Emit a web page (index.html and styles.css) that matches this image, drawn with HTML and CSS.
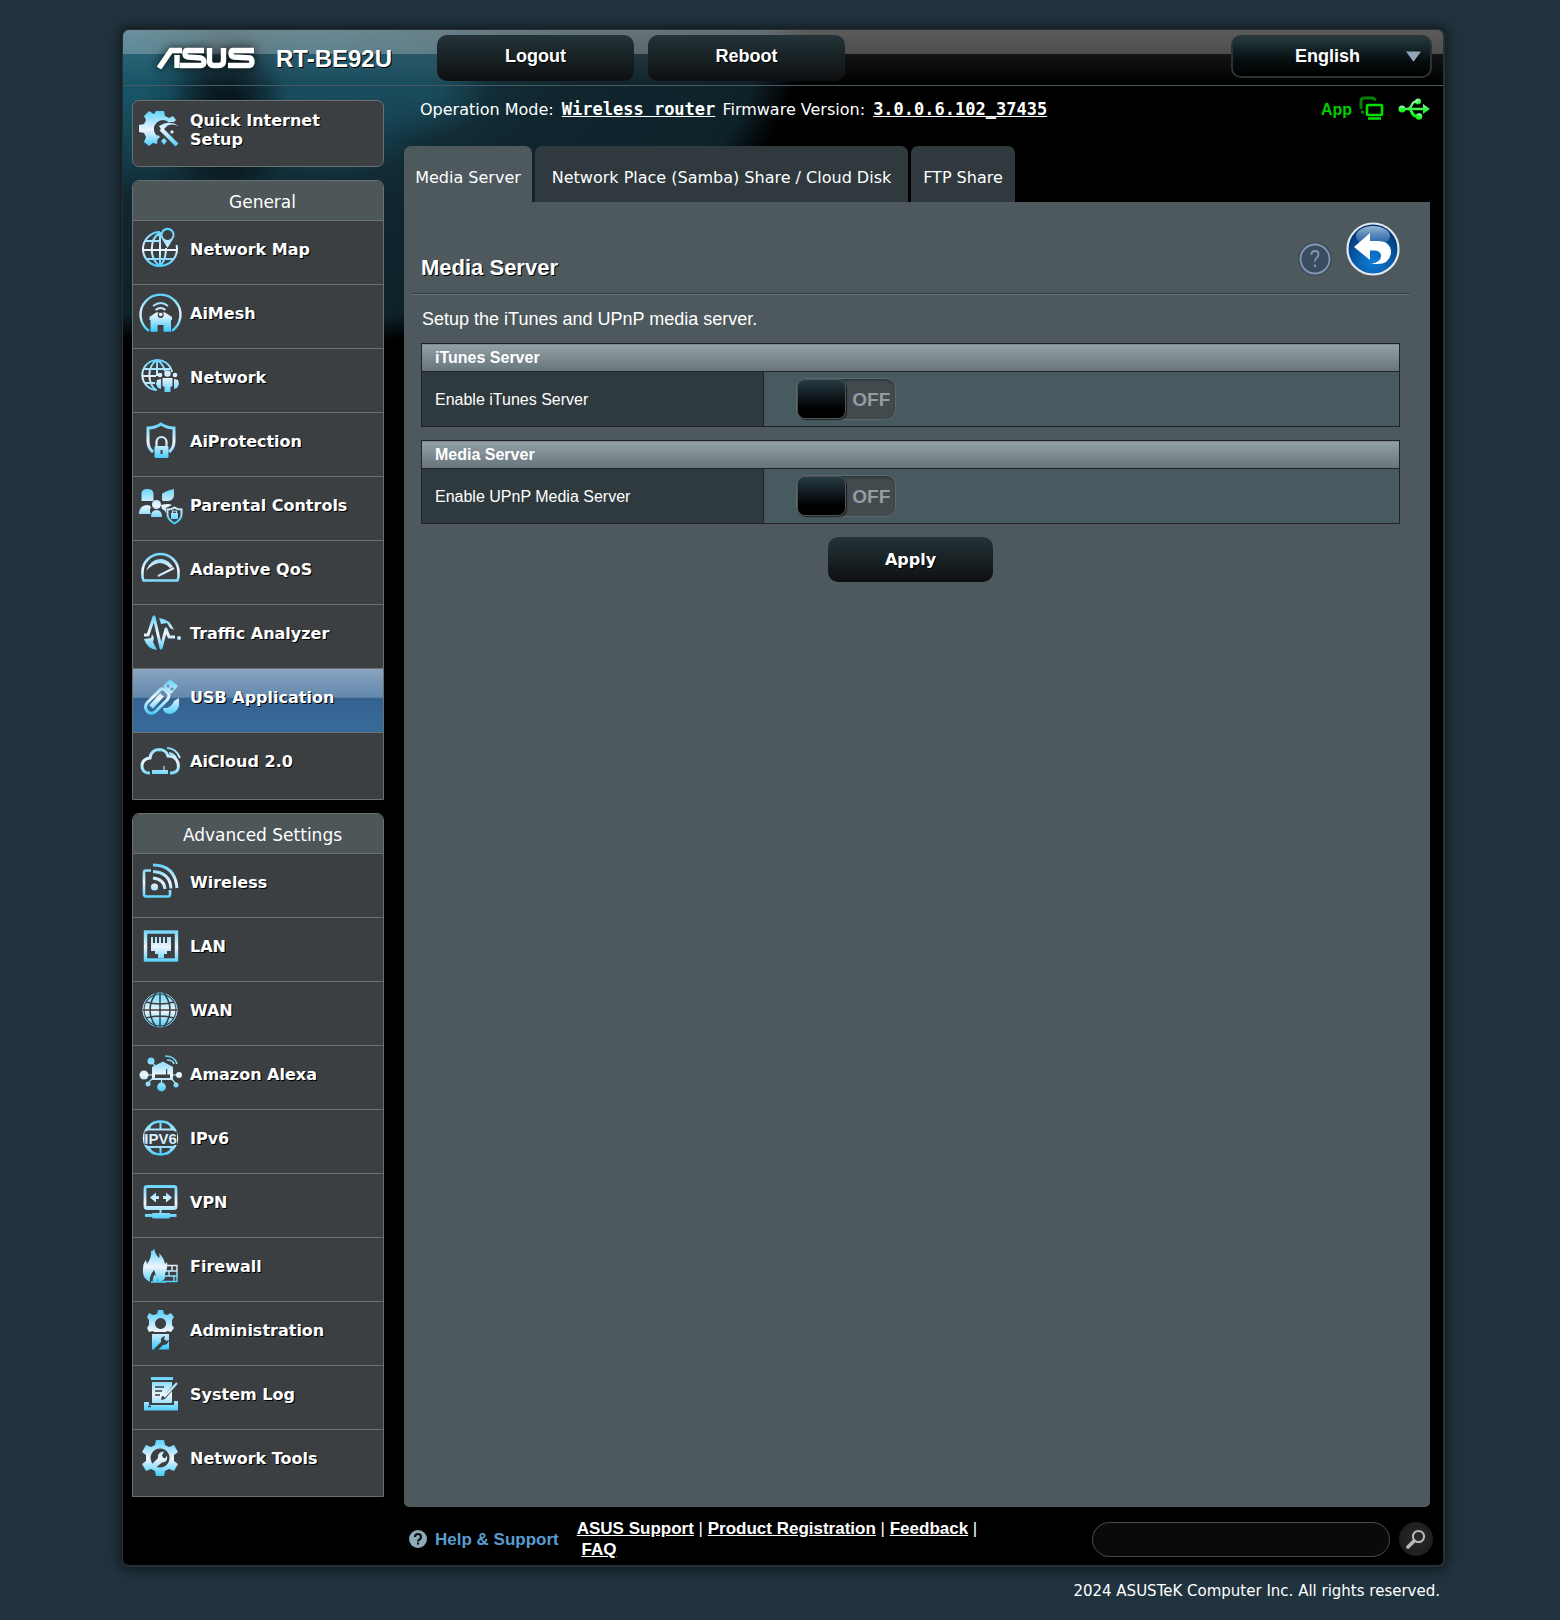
FILE: index.html
```html
<!DOCTYPE html>
<html lang="en">
<head>
<meta charset="utf-8">
<meta name="viewport" content="width=device-width, initial-scale=1">
<title>ASUS Wireless Router RT-BE92U - Media Server</title>
<link rel="stylesheet" href="styles.css">
</head>
<body>
<svg class="defs" width="0" height="0" aria-hidden="true">
  <defs>
    <linearGradient id="ice" gradientUnits="userSpaceOnUse" x1="0" y1="7" x2="0" y2="43">
      <stop offset="0" stop-color="#5ed2fb"/><stop offset=".52" stop-color="#eef5fd"/><stop offset="1" stop-color="#3fcbfb"/>
    </linearGradient>
    <radialGradient id="ball" cx=".5" cy=".75" r=".7">
      <stop offset="0" stop-color="#0a7fd8"/><stop offset=".5" stop-color="#0a5cab"/><stop offset="1" stop-color="#02306f"/>
    </radialGradient>
    <linearGradient id="gloss" x1="0" y1="0" x2="0" y2="1">
      <stop offset="0" stop-color="#9cbcd8"/><stop offset="1" stop-color="#3f7db5" stop-opacity=".4"/>
    </linearGradient>
    <linearGradient id="usbgreen" x1="0" y1="0" x2="0" y2="1">
      <stop offset="0" stop-color="#a8f5c0"/><stop offset=".5" stop-color="#3bf548"/><stop offset="1" stop-color="#00f800"/>
    </linearGradient>
  </defs>
</svg>

<div class="shell">
  <header class="top">
    <svg class="logo" viewBox="0 0 98 22" role="img" aria-label="ASUS">
      <g fill="none" stroke="#fff" stroke-width="5.400">
        <path d="M2 21 14 3.500H25"/><path d="M20 8V21"/>
        <path d="M47 3.500H30q-2 0-2 3t3 3.500l13 1q3 1 3 4t-3 3.500H23"/>
        <path d="M52.500 1V14q0 4.500 4 4.500h5q5 0 5-4.500V1"/>
        <path d="M97 3.500H76q-2 0-2 3t3 3.500l16 1q2 1 2 4t-3 3.500H71"/>
      </g>
    </svg>
    <span class="model">RT-BE92U</span>
    <button class="btn top-btn logout" type="button">Logout</button>
    <button class="btn top-btn" type="button">Reboot</button>
    <div class="lang">
      <select aria-label="Language"><option>English</option></select>
      <svg class="caret" viewBox="0 0 16 12" aria-hidden="true"><path d="M0 0H16L8 11Z" fill="#92a7bb"/></svg>
    </div>
  </header>

  <div class="body">
    <nav class="side" aria-label="Main menu">
      <a class="quick" href="#">
        <svg class="ic" viewBox="0 0 48 48" aria-hidden="true">
          <path class="f" d="M19 7h8l1 5 4 2 4-2 3 4-2 2h-8a8 8 0 0 0-8 14l-1 8-4-1-4 3-5-4 2-5-2-4-5-1v-7l5-1 2-4-2-4 5-5 5 3Z" transform="translate(1 0)"/>
          <circle class="d" cx="27" cy="25" r="9"/>
          <path d="M25 25 41 41" stroke-width="4"/><path class="f" d="M23 22q10-7 20 0q-8-3-12 0l-5 5Z"/><path class="f" d="m28 34 3 3-3 4-3-4ZM36 26l2 2-2 2-2-2ZM22 31l2 2-2 2-2-2Z"/>
        </svg>
        <span>Quick Internet Setup</span>
      </a>

      <section class="group">
        <h2>General</h2>
        <a href="#">
          <svg class="ic" viewBox="0 0 48 48" aria-hidden="true">
            <path d="M24 8A17 17 0 1 0 40.500 21M24 8v34M24 9C13 15 13 35 24 42M30 24c0 8-2 14-6 18M10 17H24M7 26H41M10 35H38"/>
            <path class="f" fill-rule="evenodd" d="M31.500 24 26 15a7 7 0 1 1 11 0ZM31.500 6a5 5 0 1 0 .1 0Z"/>
          </svg><span>Network Map</span></a>
        <a href="#">
          <svg class="ic" viewBox="0 0 48 48" aria-hidden="true">
            <path d="M13 43A20 20 0 1 1 36 43" stroke-width="2.400"/>
            <path d="M17 18q8-6 15 0M19.500 22q5-4 10 0" stroke-width="1.800"/>
            <path class="f" d="M13.500 29 20 24.500h9L36 29v3h-1V43.700H27.500V37h-6v6.700H14.500V32h-1Z"/><circle class="d" cx="24.700" cy="27" r="3"/><circle class="f" cx="24.700" cy="26.500" r="1.800"/>
          </svg><span>AiMesh</span></a>
        <a href="#">
          <svg class="ic" viewBox="0 0 48 48" aria-hidden="true">
            <path d="M36 20A15 15 0 1 0 21 38M21 8v16M21 8C11 14 11 31 20 38M21 8c5 3 7 7 8 11M8 17H34M6 24H20M9 31H19"/>
            <g class="f"><circle cx="31.500" cy="21.500" r="3.200"/><circle cx="24" cy="23" r="2.300"/><circle cx="39" cy="23" r="2.300"/><path d="M26.500 26h10v8l-2 1v5h-6v-5l-2-1ZM25 27v10l-3-1-2-4 1-4ZM38 27v10l3-1 2-4-1-4Z"/></g>
          </svg><span>Network</span></a>
        <a href="#">
          <svg class="ic" viewBox="0 0 48 48" aria-hidden="true">
            <path d="M17 36Q12 32 12 25V12q7 0 13-4 6 4 13 4V25q0 7-5 11" stroke-width="3"/>
            <path d="M20.500 31V26a5 5 0 0 1 10 0v5" stroke-width="2.200"/><rect class="f" x="18.500" y="30" width="14" height="12" rx="1.500"/><path class="d" d="M24.500 34h2v4h-2Z"/>
          </svg><span>AiProtection</span></a>
        <a href="#">
          <svg class="ic" viewBox="0 0 48 48" aria-hidden="true">
            <g class="f"><path d="M5.500 21V14q0-5 6-5t6 5v7ZM26 20V14q3-3 12-5v7q-1 4-5 5h-6ZM3 34q0-8 8-9 3 0 4 2-2 4 0 7Z"/><circle cx="20.500" cy="24.500" r="4.500"/><path d="M15 37q0-7 5.500-7t5.500 7ZM25 25q8-2 11 0l-6 3v5q-1-3-4-4Z"/></g>
            <path d="M38.500 27.500q3 2 7 2v5q0 5-7 9-7-4-7-9v-5q4 0 7-2Z"/><path class="f" d="M35 33h7v6h-7Z"/><path d="M36.500 33v-2h4v2" stroke-width="1.200"/>
          </svg><span>Parental Controls</span></a>
        <a href="#">
          <svg class="ic" viewBox="0 0 48 48" aria-hidden="true">
            <path d="M7.500 36.500Q6 33 6.500 28A18 18 0 0 1 42.500 28q.5 5-1 8.500Z" stroke-width="2.600"/>
            <path class="f" d="M10 27Q15 14 26 15q7 1 11 8l-3 1q-5-5-11-5-7 1-13 8Z"/><path d="M22 32 38 24"/>
          </svg><span>Adaptive QoS</span></a>
        <a href="#">
          <svg class="ic" viewBox="0 0 48 48" aria-hidden="true">
            <path d="M8 27h4L18 9l7 31 5-19 3 8h6" stroke-width="3" stroke-linejoin="round"/><circle class="f" cx="43" cy="30" r="2"/>
            <path class="f" d="M8 31l7-1 1-4 2 4-1 4 4 8Q11 41 8 31ZM23 10q11 1 15 12l-4-2-3-5-6 1Z"/>
          </svg><span>Traffic Analyzer</span></a>
        <a href="#" class="on" aria-current="page">
          <svg class="ic" viewBox="0 0 48 48" aria-hidden="true">
            <path d="M31 20q4 3 0 8L19 40q-5 3-8-1-3-4 0-8L25 17q3-1 6 3Z" stroke-width="3"/><path d="M15 35 26 23" stroke-width="5"/>
            <path class="f" fill-rule="evenodd" d="m34 7 8 7-7 8-8-8Zm-2 5-2 2 2 2 2-2Zm4 3-2 2 2 2 2-2ZM43 26v8q-3 8-10 8-6-1-6-6 8 1 11-7Z"/>
          </svg><span>USB Application</span></a>
        <a href="#">
          <svg class="ic" viewBox="0 0 48 48" aria-hidden="true">
            <path d="M14 37H12q-6-1-6-7 0-7 8-8 1-8 9-8.500 7 0 9 6.500 8 0 10 7 2 9-6 10h-2" stroke-width="3"/>
            <path class="f" d="M16 34h16v4H16Z"/><path d="M28 30v4" stroke-width="1.200"/><path d="M31 12q9 0 13 10M33 17q5 1 7 5"/>
          </svg><span>AiCloud 2.0</span></a>
      </section>

      <section class="group">
        <h2>Advanced Settings</h2>
        <a href="#">
          <svg class="ic" viewBox="0 0 48 48" aria-hidden="true">
            <path d="M15 13.500H10q-2 0-2 2V37q0 2.500 2 2.500H32q2 0 2-2V33" stroke-width="2.600"/>
            <path d="M17 8q22 0 24 23M17 14.500q17 1 18 17M17 21q11 1 12 11" stroke-width="3"/><circle class="f" cx="18.500" cy="30" r="3.600"/>
          </svg><span>Wireless</span></a>
        <a href="#">
          <svg class="ic" viewBox="0 0 48 48" aria-hidden="true">
            <rect x="9.500" y="11" width="31" height="28" stroke-width="3.400"/>
            <path class="f" d="M15 16h2v6h2v-6h2v6h2v-6h2v6h2v-6h2v6h2v-6h4V30H31v3H28v4H22V33H19V30H15Z"/>
          </svg><span>LAN</span></a>
        <a href="#">
          <svg class="ic" viewBox="0 0 48 48" aria-hidden="true">
            <circle class="f" cx="24" cy="25" r="15.500"/><circle cx="24" cy="25" r="17" stroke-width="1"/>
            <path class="cut" d="M24 8v34M7 25H41M10 17q14 4 28 0M10 33q14-4 28 0M20 8q-12 17 0 34M28 8q12 17 0 34"/>
          </svg><span>WAN</span></a>
        <a href="#">
          <svg class="ic" viewBox="0 0 48 48" aria-hidden="true">
            <path d="M8 26h34M15 12l5 6M12 34l6-6M40 35l-6-7M25.500 30v8" stroke-width="1.200"/>
            <g class="f"><path d="M16 18 27 12.500 37 18V31H16Z"/><circle cx="8" cy="26" r="4.500"/><circle cx="15" cy="12" r="3.500"/><circle cx="43" cy="26" r="3"/><circle cx="12" cy="35" r="2.500"/><circle cx="40" cy="36" r="2.500"/><circle cx="25.500" cy="38" r="4.400"/></g>
            <path class="d" d="M19 25.500h11V20h1.200v5.500H34V29H19Z"/><path d="M29 7q10 0 12 8M31 11q6 0 7 4" stroke-width="1.600"/>
          </svg><span>Amazon Alexa</span></a>
        <a href="#">
          <svg class="ic" viewBox="0 0 48 48" aria-hidden="true">
            <circle cx="24.500" cy="25" r="16.500" stroke-width="2.400"/><path d="M24.500 8v8M24.500 35v7M18 9q-4 3-5 7M31 9q4 3 5 7M18 41q-4-3-5-7M31 41q4-3 5-7M10 16.500H39M10 34H39"/>
            <path class="d" d="M8.500 18.500H41V32H8.500Z"/><text class="v6" x="24.500" y="30.500" text-anchor="middle">IPV6</text>
          </svg><span>IPv6</span></a>
        <a href="#">
          <svg class="ic" viewBox="0 0 48 48" aria-hidden="true">
            <rect x="9" y="9.500" width="31" height="22" rx="2" stroke-width="2.800"/><path class="f" d="M8 29H41v3H8Z"/>
            <path class="f" d="M14 20.500l6-5v3.500h3v3h-3v3.500ZM36 20.500l-6-5v3.500h-3v3h3v3.500ZM23.500 32h2v4h8l1 1h6v3h-6L33 41.500H17L15.500 40H9v-3h6.500L17 36h6.500Z"/>
          </svg><span>VPN</span></a>
        <a href="#">
          <svg class="ic" viewBox="0 0 48 48" aria-hidden="true">
            <path class="f" fill-rule="evenodd" d="M18 7q1 6 5 10 1-2 0-5 5 5 6 11l2-2q1 6-2 12v4q-2 4-7 4-1-5-4-12-5 6-4 12-8-4-7-13 0-6 3-9l1 4q5-7 4-13 3 0 3-3Zm1 26q-3 4-2 8h4q1-4-2-8Z"/>
            <path d="M27 40.500H41V24.500H31M30 30H41M29 35H41M36 25v5M33 30v5M38 35v5M15 41H30" stroke-width="1.400"/>
          </svg><span>Firewall</span></a>
        <a href="#">
          <svg class="ic" viewBox="0 0 48 48" aria-hidden="true">
            <path class="f" fill-rule="evenodd" d="M22 5h5l1 4 3 1 4-2 3 4-2 3v5l2 3-3 4-4-1-1 1H18l-1-1-4 1-2-4 2-3v-5l-2-3 2-4 4 2 4-1ZM24.500 13a5.500 5.500 0 1 0 .1 0Z"/>
            <path class="f" d="M16 29H33V44.500H16Z"/><path class="d" d="m18 44 7-7q-1-5 4-6l-1 3 2 2 3-1q-1 5-6 5l-6 6Z"/>
          </svg><span>Administration</span></a>
        <a href="#">
          <svg class="ic" viewBox="0 0 48 48" aria-hidden="true">
            <path class="f" d="M15 8H37v3H15ZM16 13H36v4L28 27h-2l-1 4 4-1 7-8V34H16ZM8 33h5v3h25v-4h4v9.500H8Z"/><path d="M28 28 41 14" stroke-width="2.400"/>
            <path class="cut" d="M19 18h9M19 22h7M19 26h5M12 37.500h3" stroke-width="1.400"/>
          </svg><span>System Log</span></a>
        <a href="#">
          <svg class="ic" viewBox="0 0 48 48" aria-hidden="true">
            <path class="f" fill-rule="evenodd" d="M20 7h8l1 5 4 2 5-2 4 7-4 3v6l4 3-4 7-5-2-4 2-1 5h-8l-1-5-4-2-5 2-4-7 4-3v-6l-4-3 4-7 5 2 4-2ZM24 15.500a9.500 9.500 0 1 0 .1 0Z"/>
            <path class="f" d="m16 31 6-6q-1-6 6-6.500l-2 4 1 2 2 1 2-3q1 7-5 7l-6 5Z"/>
          </svg><span>Network Tools</span></a>
      </section>
    </nav>

    <main class="main">
      <div class="info">
        <p>Operation Mode: <a href="#">Wireless router</a> Firmware Version: <a href="#">3.0.0.6.102_37435</a></p>
        <div class="status">
          <a class="app" href="#">App</a>
          <svg viewBox="0 0 28 26" width="28" height="26" fill="none" aria-hidden="true">
            <path d="M3 13V5q0-3 3-3H15l3 2M3 16h3" stroke="#067f06" stroke-width="3"/>
            <rect x="9" y="9" width="15" height="10" rx="1" stroke="#00e000" stroke-width="2.600"/><path d="M10 22.500H23" stroke="#00e000" stroke-width="2.600"/>
          </svg>
          <svg viewBox="0 0 32 22" width="32" height="22" aria-hidden="true">
            <g fill="url(#usbgreen)"><circle cx="4" cy="11" r="3.500"/><path d="M25 6l7 5-7 5ZM4 9.800H26v2.400H4Z"/><circle cx="20" cy="3.500" r="3"/><circle cx="21" cy="18.500" r="3.300"/><path d="M8 10.500Q12 9 13 6q2-4 7-4v3q-4-1-5 2-1 3-3 4ZM12 11q3 1 4 4 1 2 4 2v3q-5 0-7-4-1-3-3-5Z"/></g>
          </svg>
        </div>
      </div>
      <nav class="tabs" aria-label="USB application pages">
        <a class="cur" href="#" aria-current="page">Media Server</a>
        <a class="wide" href="#">Network Place (Samba) Share / Cloud Disk</a>
        <a href="#">FTP Share</a>
      </nav>
      <form class="panel">
        <div class="head">
          <h1>Media Server</h1>
          <a href="#" aria-label="Help">
            <svg viewBox="0 0 34 34" width="34" height="34"><circle cx="17" cy="17" r="17" fill="#3a4c60"/><circle cx="17" cy="17" r="14.500" fill="none" stroke="#8397b1" stroke-width="1.800"/><path d="M13.500 13q0-4 3.500-4t3.500 3.500q0 2-2 3.500-1.500 1-1.500 3.500" fill="none" stroke="#8397b1" stroke-width="1.800"/><path d="M16 22.500h2V25h-2Z" fill="#8397b1"/></svg>
          </a>
          <a href="#" aria-label="Back">
            <svg viewBox="0 0 54 54" width="54" height="54"><circle cx="27" cy="27" r="25.500" fill="url(#ball)" stroke="#e3e9f0" stroke-width="2.200"/><ellipse cx="27" cy="14" rx="17" ry="10" fill="url(#gloss)"/><path d="M8 25 24 11v8h9q12 1 12 11.500Q44 42 31 42h-6q10-2 10-8 0-5-6-5.500h-5V38Z" fill="#fff"/></svg>
          </a>
        </div>
        <p class="desc">Setup the iTunes and UPnP media server.</p>
        <table>
          <colgroup><col class="name"><col></colgroup>
          <thead><tr><th colspan="2" scope="colgroup">iTunes Server</th></tr></thead>
          <tbody><tr><th scope="row"><label for="itunes">Enable iTunes Server</label></th>
            <td><span class="toggle"><input type="checkbox" role="switch" id="itunes"><span class="off">OFF</span></span></td></tr></tbody>
        </table>
        <table>
          <colgroup><col class="name"><col></colgroup>
          <thead><tr><th colspan="2" scope="colgroup">Media Server</th></tr></thead>
          <tbody><tr><th scope="row"><label for="upnp">Enable UPnP Media Server</label></th>
            <td><span class="toggle"><input type="checkbox" role="switch" id="upnp"><span class="off">OFF</span></span></td></tr></tbody>
        </table>
        <button class="btn apply" type="button">Apply</button>
      </form>
    </main>
  </div>

  <footer class="foot">
    <a class="help" href="#">
      <svg viewBox="0 0 18 20" width="18" height="20" aria-hidden="true"><circle cx="9" cy="10" r="9" fill="#8fabb8"/><path d="M6 8q0-3 3-3t3 3q0 1.500-1.500 2.500T9 12.500M9 13.500v2" fill="none" stroke="#0b0f12" stroke-width="2.200"/></svg>
      Help &amp; Support</a>
    <p class="links"><a href="#">ASUS Support</a> | <a href="#">Product Registration</a> | <a href="#">Feedback</a> | <br>&nbsp;<a href="#">FAQ</a></p>
    <input class="search" type="text" aria-label="Search">
    <button class="find" type="button" aria-label="Search">
      <svg viewBox="0 0 20 20" width="20" height="20" aria-hidden="true"><g fill="none" stroke="#b9b9b9"><circle cx="12.500" cy="7.500" r="5.600" stroke-width="2"/><path d="M8 12 2 18" stroke-width="3.600" stroke-linecap="round"/></g></svg>
    </button>
  </footer>
</div>
<p class="copy">2024 ASUSTeK Computer Inc. All rights reserved.</p>
</body>
</html>
```

FILE: styles.css
```css
* { box-sizing: border-box; }

body {
  margin: 0;
  padding: 29px 115px 16px 122px;
  background: #21333e;
  color: #fff;
  font: 16px/19px Verdana, "DejaVu Sans", sans-serif;
}

p, h1, h2 { margin: 0; }
a { color: inherit; text-decoration: none; }
.defs { position: absolute; }

.shell {
  border: 1px solid #2a2f31;
  border-width: 1px 2px 2px 1px;
  border-radius: 7px;
  overflow: hidden;
  background:
    radial-gradient(ellipse 60px 100px at 105px 90px, rgba(5, 14, 20, .85) 20%, rgba(5, 14, 20, 0)),
    radial-gradient(ellipse 75px 130px at 10px 40px, rgba(23, 92, 112, .8) 20%, rgba(23, 92, 112, 0)),
    radial-gradient(ellipse 110px 90px at 210px 60px, rgba(26, 78, 96, .9) 30%, rgba(26, 78, 96, 0)),
    radial-gradient(ellipse 70px 60px at 300px 50px, rgba(28, 84, 100, .7) 30%, rgba(28, 84, 100, 0)),
    radial-gradient(ellipse 60px 140px at 190px 290px, rgba(0, 0, 0, .9) 20%, rgba(0, 0, 0, 0)),
    radial-gradient(ellipse 540px 320px at 140px 0, #14414f 10%, #10252e 60%, #0e222a 92%, rgba(0, 0, 0, 0)),
    #000;
  box-shadow: 0 0 12px 3px rgba(0, 0, 0, .5);
}

.btn {
  border: 0;
  border-radius: 10px;
  background: linear-gradient(#233438, #0e0f10);
  color: #fff;
  font-weight: bold;
  text-shadow: 1px 1px 0 #000;
}

/* header */
.top {
  display: flex;
  align-items: flex-start;
  height: 56px;
  margin-bottom: 14px;
  padding-right: 11px;
  border-bottom: 1px solid #4a5a62;
  background: linear-gradient(rgba(255, 255, 255, .36), rgba(255, 255, 255, .3) 24px, rgba(255, 255, 255, .08) 24px, rgba(255, 255, 255, 0));
  font-family: "Liberation Sans", Arial, sans-serif;
}
.logo { width: 98px; height: 22px; margin: 17px 21px 0 34px; filter: drop-shadow(0 0 4px rgba(0, 0, 0, .8)); }
.model { margin-top: 15px; font-size: 24px; line-height: 28px; font-weight: bold; text-shadow: 1px 1px 0 #000; }
.top-btn { width: 197px; height: 46px; margin: 5px 14px 0 0; padding: 0 0 5px; font: bold 18px/20px "Liberation Sans", Arial, sans-serif; }
.logout { margin-left: 45px; }
.lang { position: relative; margin: 5px 0 0 auto; }
.lang select {
  display: block;
  width: 201px;
  height: 43px;
  padding: 0 8px 1px 0;
  appearance: none;
  border: 2px solid #2b3336;
  border-radius: 10px;
  background: linear-gradient(#243a40, #070d0f 60%, #000);
  color: #fff;
  font: bold 18px/20px "Liberation Sans", Arial, sans-serif;
  text-align: center;
  text-align-last: center;
}
.caret { position: absolute; right: 11px; top: 16px; width: 15px; height: 12px; pointer-events: none; }

.body { display: flex; gap: 20px; padding: 0 13px 0 9px; }

/* sidebar */
.side { flex: none; width: 252px; padding-bottom: 10px; font-weight: bold; text-shadow: 1px 1px 0 #000; }
.side a { display: flex; gap: 6px; padding-left: 3px; background: #3b3f42; }
.side a > span { padding-top: 19px; }
.ic { flex: none; width: 48px; height: 48px; margin-top: 3px; fill: none; stroke: url(#ice); stroke-width: 2; }
.ic .f { fill: url(#ice); stroke: none; }
.ic .d { fill: #3b3f42; stroke: none; }
.ic .cut { stroke: #3b3f42; stroke-width: 1.5; }
.v6 { fill: url(#ice); stroke: none; font: bold 15px/16px "Liberation Sans", Arial, sans-serif; text-shadow: none; }
.side .quick { height: 67px; border: 1px solid #6b7071; border-radius: 7px; }
.side .quick > span { width: 150px; padding-top: 10px; }
.group { margin-top: 13px; border: 1px solid #6b7071; border-radius: 7px 7px 0 0; overflow: hidden; }
.group a { height: 64px; border-top: 1px solid #6b7071; }
.group a:last-child { height: 67px; }
.group h2 { height: 39px; padding-left: 9px; background: #4d5659; font-size: 17px; line-height: 42px; font-weight: normal; text-align: center; text-shadow: none; }
.side a.on { background: linear-gradient(#89a4bf, #6388ac 45%, #34628f 46%, #386a9b); }

/* content */
.main { flex: 1; min-width: 0; display: flex; flex-direction: column; }
.info { display: flex; align-items: center; justify-content: space-between; height: 46px; margin-top: -14px; padding-left: 16px; }
.info p a { margin: 0 2px 0 3px; font: bold 17px/19px "DejaVu Sans Mono", monospace; text-decoration: underline; }
.status { display: flex; align-items: center; gap: 12px; }
.app { margin-right: -6px; color: #0c0; font: bold 16px/19px "Liberation Sans", Arial, sans-serif; }
.tabs { display: flex; gap: 3px; margin-top: 14px; }
.tabs a { min-width: 104px; height: 56px; padding: 0 10px; border-radius: 7px 7px 0 0; background: #2f393e; line-height: 63px; text-align: center; }
.tabs .cur { min-width: 128px; background: #4d595d; }
.tabs .wide { min-width: 373px; }
.panel { flex: 1; padding: 20px 30px 20px 17px; border-radius: 0 0 5px 5px; background: #4d595d; font-family: "Liberation Sans", Arial, sans-serif; }
.head { display: flex; align-items: flex-end; gap: 14px; margin: 0 -10px 13px; padding: 0 10px 18px; border-bottom: 1px solid #5f7580; box-shadow: inset 0 -1px 0 #343e43; }
.head h1 { flex: 1; margin-bottom: -5px; font-size: 22px; line-height: 26px; text-shadow: 1px 1px 0 #000; }
.head svg { display: block; }
.desc { margin: 0 0 13px 1px; font-size: 18px; line-height: 22px; }

table { width: 100%; margin-bottom: 13px; border-collapse: collapse; table-layout: fixed; }
.name { width: 35%; }
th, td { padding: 0; border: 1px solid #222; }
th { padding-left: 13px; text-align: left; }
thead th { height: 28px; background: linear-gradient(#93a0a5, #67757b); }
tbody th { height: 55px; background: #2f3a3e; font-weight: normal; }
td { padding-left: 32px; background: #475a5f; }
.toggle { display: flex; align-items: center; width: 100px; height: 42px; border: 1px solid #5c686b; border-radius: 10px; background: #414b4d; box-shadow: inset 0 2px 2px #30383a; }
.toggle input { flex: none; width: 49px; height: 40px; margin: 0; appearance: none; border: 1px solid #4b5355; border-radius: 8px; background: linear-gradient(#253b43, #000 75%); box-shadow: 1px 1px 1px #1c2021; }
.off { margin-left: 6px; color: #969c9e; font-size: 19px; font-weight: bold; }
.apply { display: block; width: 165px; height: 45px; margin: 0 auto; padding: 0; font: bold 16px/20px Verdana, "DejaVu Sans", sans-serif; }

/* footer */
.foot { display: flex; align-items: center; height: 58px; padding: 6px 10px 0 286px; font: bold 17px/21px "Liberation Sans", Arial, sans-serif; }
.help { display: flex; gap: 8px; margin-right: 18px; color: #5a9bd0; white-space: nowrap; }
.links { margin-right: auto; white-space: nowrap; font-weight: normal; }
.links a { font-weight: bold; text-decoration: underline; }
.search { width: 298px; height: 35px; padding: 0 16px; border: 1px solid #4a4a4a; border-radius: 18px; background: #0a0a0a; color: #fff; }
.find { display: flex; align-items: center; justify-content: center; width: 34px; height: 34px; margin-left: 9px; padding: 0; border: 0; border-radius: 50%; background: radial-gradient(#2a2a2a, #191919); }

.copy { margin: 14px 5px 0 0; text-align: right; font-size: 15px; line-height: 20px; }
```
